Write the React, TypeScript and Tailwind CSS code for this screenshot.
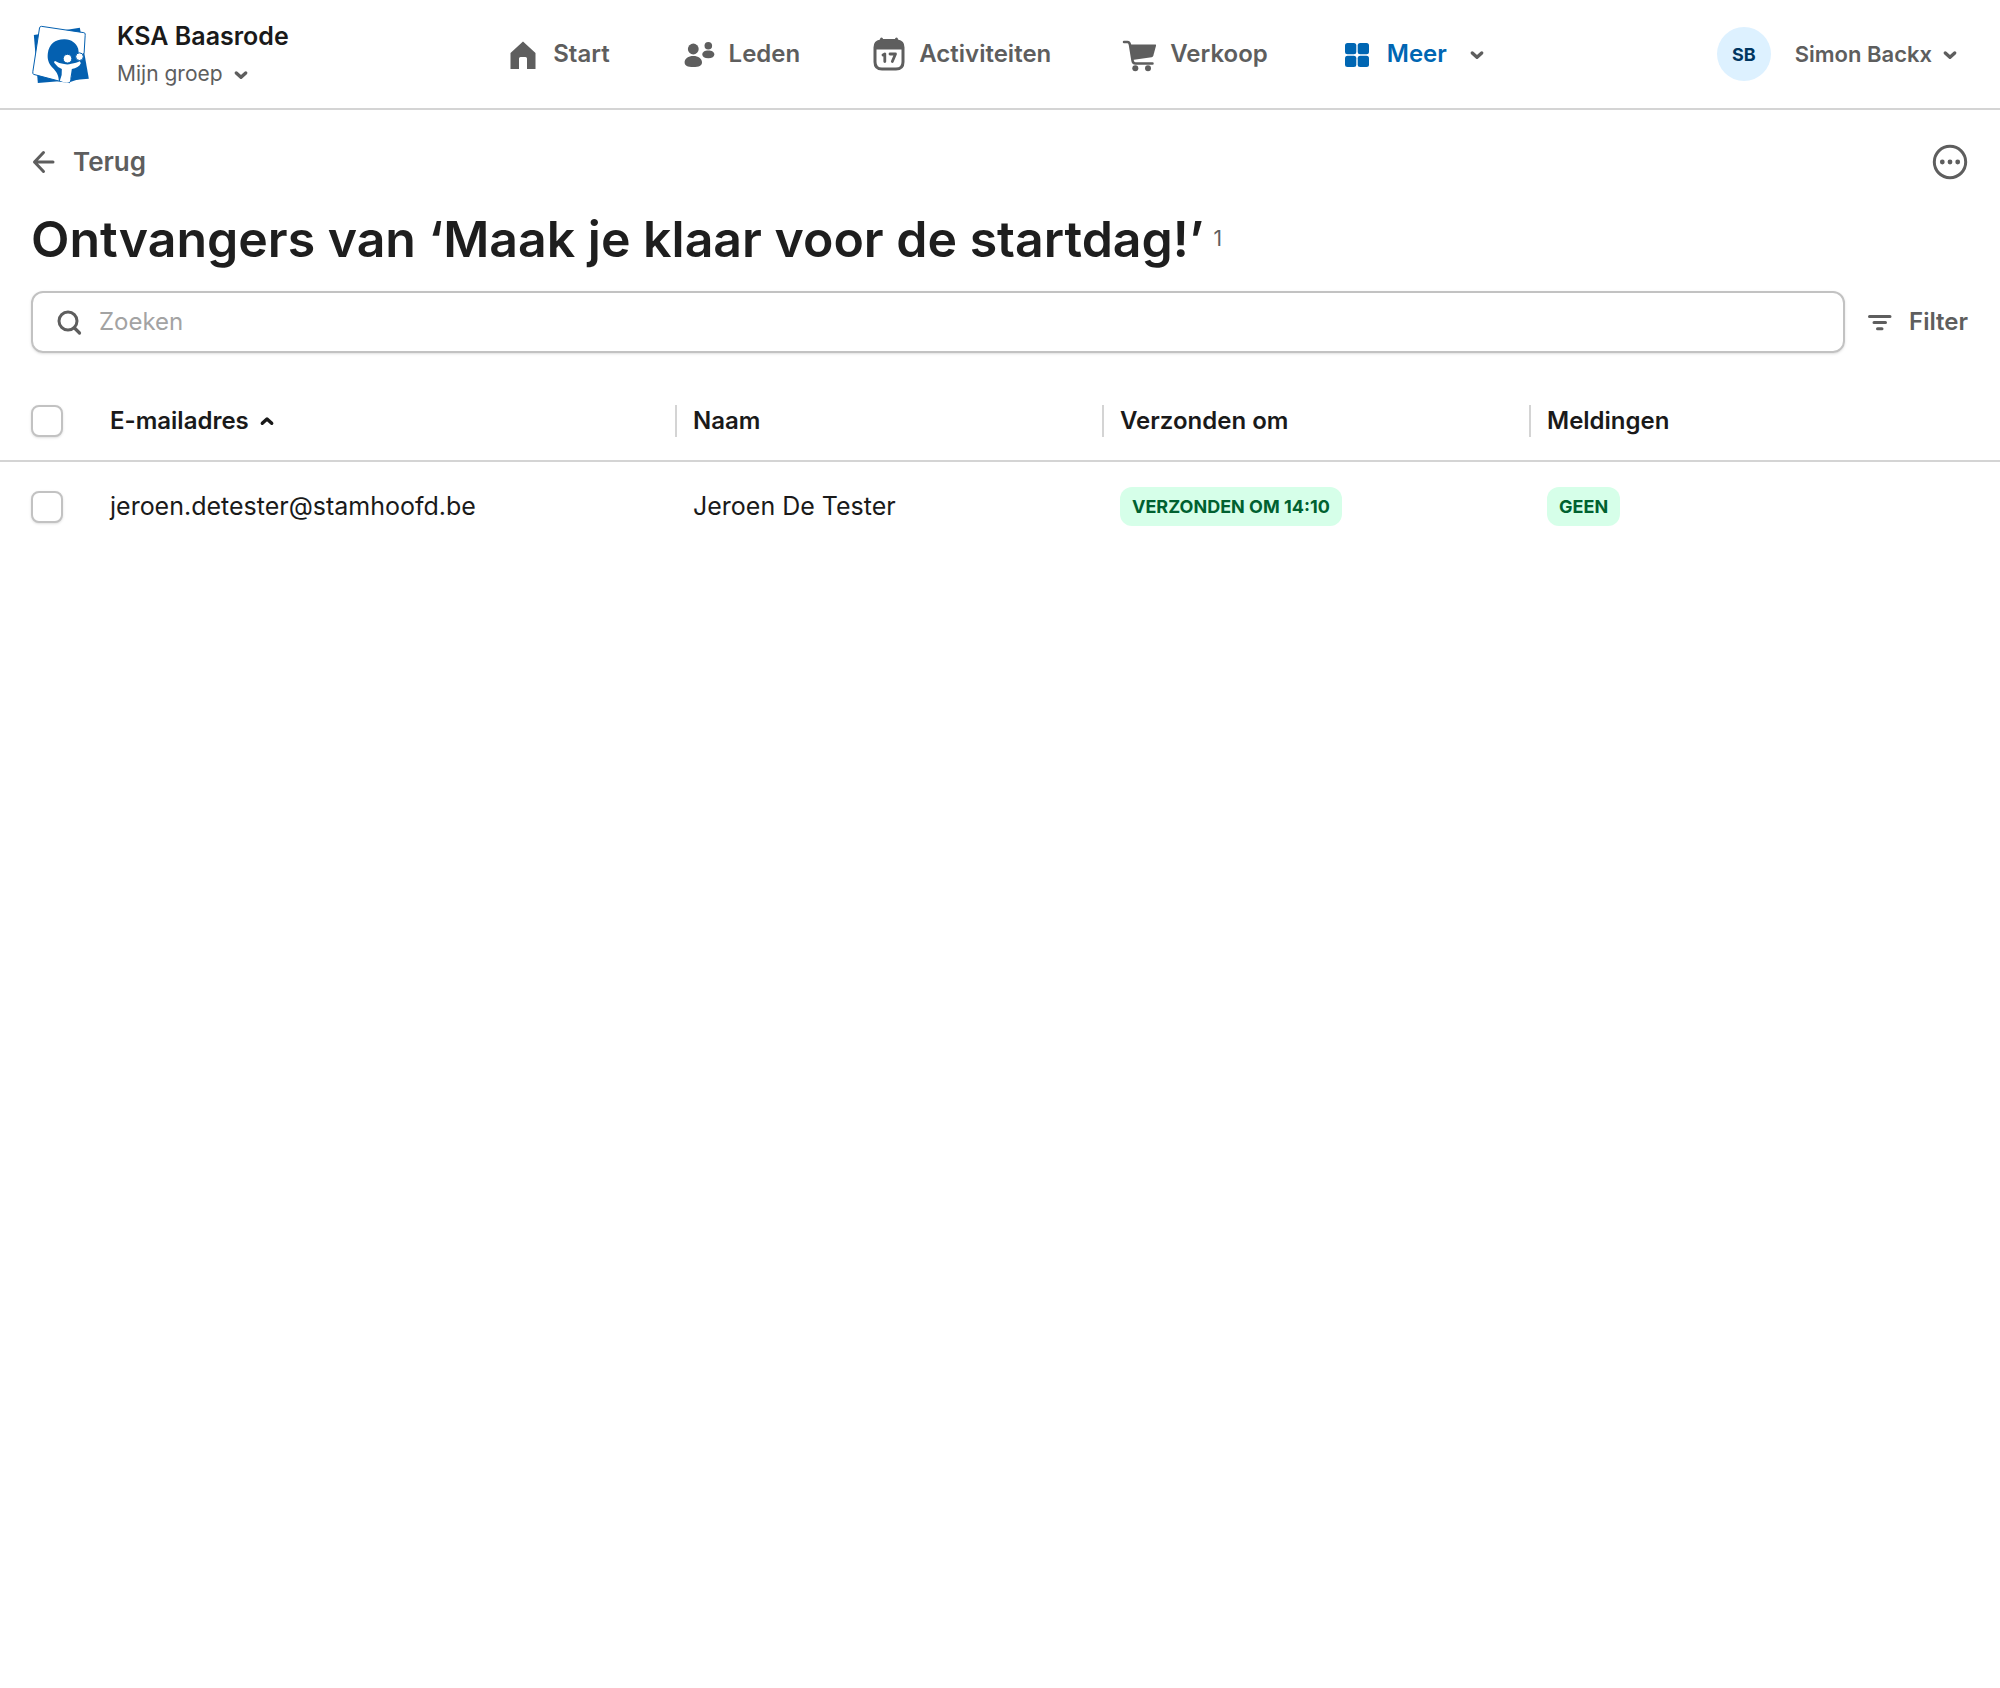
import type { ReactNode } from "react";

type NavItem = {
  label: string;
  icon: ReactNode;
  active?: boolean;
};

type Recipient = {
  email: string;
  name: string;
  sent: string;
  notices: string;
};

const recipients: Recipient[] = [
  {
    email: "jeroen.detester@stamhoofd.be",
    name: "Jeroen De Tester",
    sent: "Verzonden om 14:10",
    notices: "Geen",
  },
];

const columns = ["E-mailadres", "Naam", "Verzonden om", "Meldingen"];

function Icon({ children }: { children: ReactNode }) {
  return (
    <svg
      viewBox="0 0 36 36"
      className="size-9 shrink-0"
      fill="none"
      stroke="currentColor"
      strokeLinecap="round"
      strokeLinejoin="round"
      aria-hidden="true"
    >
      {children}
    </svg>
  );
}

function ChevronDown() {
  return (
    <Icon>
      <path d="M13.3 17 18 21.300l4.700-4.300" strokeWidth="3.400" />
    </Icon>
  );
}

function Logo() {
  return (
    <svg viewBox="100 75 170 177" className="h-[59px] w-[57px] shrink-0" aria-hidden="true">
      <path d="M105 105 243 83 270 236 117 249Z" fill="#0460b0" />
      <path
        d="M128 79 255 98Q261 99 259 106L256 157 236 206 212 248 180 243 104 223Q101 221 102 215L122 84Q124 78 128 79Z"
        fill="#fff"
        stroke="#0460b0"
        strokeWidth="3"
      />
      <path
        d="M180 243C180 226 172 214 162 204C148 190 145 176 147 160C151 132 170 117 198 118C218 119 232 129 238 146L240 160 256 180 250 200 226 206 212 248Z"
        fill="#0460b0"
      />
      <path d="M256 172 262 230 214 246 222 206Z" fill="#0460b0" />
      <path
        d="M169 183C176 188 186 191 196 192Q207 195 217 191C228 190 236 187 243 184L246 190C242 200 232 205 219 207L213 245Q205 252 183 242Q191 224 189 207Q176 202 166 188Q165 183 169 183Z"
        fill="#fff"
      />
      <circle cx="206" cy="176" r="13" fill="#fff" stroke="#0460b0" strokeWidth="3" />
      <circle cx="242" cy="170" r="11.500" fill="#fff" stroke="#0460b0" strokeWidth="3" />
    </svg>
  );
}

const navItems: NavItem[] = [
  {
    label: "Start",
    icon: (
      <Icon>
        <path
          d="M18 5.500 30.500 17v16H22V22.500q0-1.500-1.500-1.500h-5q-1.500 0-1.500 1.500V33H5.500V17Z"
          fill="currentColor"
          stroke="none"
        />
      </Icon>
    ),
  },
  {
    label: "Leden",
    icon: (
      <Icon>
        <g fill="currentColor" stroke="none">
          <circle cx="12.300" cy="13" r="5.400" />
          <path d="M12.300 20c5 0 8.700 2.600 8.700 6.300 0 3.500-3 4.700-8.700 4.700s-8.700-1.200-8.700-4.700C3.600 22.600 7.300 20 12.300 20Z" />
          <circle cx="27.300" cy="9.800" r="3.800" />
          <path d="M27.300 14.600c3.600 0 6 1.500 6 4 0 2.400-2.200 3.600-6 3.600s-6-1.200-6-3.600c0-2.500 2.400-4 6-4Z" />
        </g>
      </Icon>
    ),
  },
  {
    label: "Activiteiten",
    icon: (
      <Icon>
        <path
          fillRule="evenodd"
          d="M9 3.500q0-2 1.500-2T12 3h12q0-1.500 1.500-1.500t1.500 2q6.500 1 6.500 8v14.500q0 8.500-8.500 8.500H11q-8.500 0-8.500-8.500V11.500Q2.500 4.500 9 3.500ZM5.500 13.500v12.500Q5.500 31.500 11 31.500h14q5.500 0 5.500-5.500V13.500Z"
          fill="currentColor"
          stroke="none"
        />
        <path d="m12 19 1.800-1v7.500M19 18h5.500l-3.200 7.500" strokeWidth="2.800" />
      </Icon>
    ),
  },
  {
    label: "Verkoop",
    icon: (
      <Icon>
        <path d="M2 6H5.500q2 0 2.500 3l2.500 15.500q.4 3 3 3h17" strokeWidth="2.500" />
        <path d="M7.500 8.500h26q.8 0 .5 1.200l-2.700 10q-.4 1.300-1.700 1.500L10.200 24Z" fill="currentColor" stroke="none" />
        <circle cx="13.300" cy="32.300" r="3" fill="currentColor" stroke="none" />
        <circle cx="26" cy="32.300" r="3" fill="currentColor" stroke="none" />
      </Icon>
    ),
  },
  {
    label: "Meer",
    active: true,
    icon: (
      <Icon>
        <g fill="currentColor" stroke="none">
          <rect x="6" y="7" width="11.300" height="11.300" rx="2.500" />
          <rect x="18.700" y="7" width="11.300" height="11.300" rx="2.500" />
          <rect x="6" y="19.700" width="11.300" height="11.300" rx="2.500" />
          <rect x="18.700" y="19.700" width="11.300" height="11.300" rx="2.500" />
        </g>
      </Icon>
    ),
  },
];

function Checkbox({ label }: { label: string }) {
  return (
    <input
      type="checkbox"
      aria-label={label}
      className="block size-8 appearance-none rounded-lg border-2 border-[#c2c2c2] bg-white shadow-sm checked:bg-[#0066b3]"
    />
  );
}

function Badge({ children }: { children: ReactNode }) {
  return (
    <span className="flex h-[39px] w-fit items-center rounded-xl bg-[#d6ffe9] px-3 text-[18px] font-bold text-[#006130] uppercase">
      {children}
    </span>
  );
}

function Header() {
  return (
    <header className="grid h-[110px] grid-cols-[1fr_auto_1fr] items-center border-b-2 border-[#d4d4d4] px-8">
      <button type="button" className="flex items-center gap-7 text-left">
        <Logo />
        <span className="flex flex-col gap-1 pt-1">
          <span className="text-[25px] leading-8 font-semibold text-[#1a1a1a]">KSA Baasrode</span>
          <span className="flex items-center text-[21px] leading-9">
            Mijn groep
            <ChevronDown />
          </span>
        </span>
      </button>

      <nav className="flex items-center gap-[71px] text-[24px] font-semibold">
        {navItems.map((item) => (
          <a
            key={item.label}
            href="#"
            className={item.active ? "flex items-center gap-3 text-[#0066b3]" : "flex items-center gap-3"}
          >
            {item.icon}
            {item.label}
            {item.active && (
              <span className="text-[#5e5e5e]">
                <ChevronDown />
              </span>
            )}
          </a>
        ))}
      </nav>

      <button type="button" className="flex items-center justify-self-end text-[22px] font-semibold">
        <span className="mr-6 flex size-[54px] items-center justify-center rounded-full bg-[#ddf1ff] text-[18px] font-bold text-[#003661]">
          SB
        </span>
        Simon Backx
        <ChevronDown />
      </button>
    </header>
  );
}

export default function App() {
  return (
    <div className="min-h-screen bg-white font-['Inter',sans-serif] text-[#5e5e5e]">
      <Header />

      <main className="pt-[34px]">
        <div className="pr-8 pl-[31px]">
          <div className="flex items-center justify-between">
            <button type="button" className="flex items-center gap-1.5 text-[26px] leading-9 font-semibold">
              <Icon>
                <path d="M22 18H3.500M12.500 8.500 3.500 18l9 9.500" strokeWidth="3" />
              </Icon>
              Terug
            </button>
            <button type="button" aria-label="Meer acties">
              <Icon>
                <circle cx="18" cy="18" r="15.700" strokeWidth="3" />
                <g fill="currentColor" stroke="none">
                  <circle cx="10.300" cy="18" r="2.400" />
                  <circle cx="18" cy="18" r="2.400" />
                  <circle cx="25.700" cy="18" r="2.400" />
                </g>
              </Icon>
            </button>
          </div>

          <h1 className="mt-[27px] flex items-center gap-2.5 text-[50px] leading-[64px] font-semibold text-[#1e1e1e]">
            Ontvangers van ‘Maak je klaar voor de startdag!’
            <span className="text-[21px] leading-6 font-normal text-[#5e5e5e]">1</span>
          </h1>

          <div className="mt-5 flex items-center gap-4">
            <label className="flex h-[62px] grow items-center gap-3 rounded-xl border-2 border-[#c2c2c2] px-[18px] shadow-sm">
              <Icon>
                <circle cx="17" cy="17" r="9" strokeWidth="3" />
                <path d="m23.500 24 5 5" strokeWidth="3.200" />
              </Icon>
              <input
                type="search"
                aria-label="Zoeken"
                placeholder="Zoeken"
                className="grow bg-transparent text-[24px] text-[#1e1e1e] outline-none placeholder:text-[#a3a3a3]"
              />
            </label>
            <button type="button" className="flex items-center gap-3 text-[24px] font-semibold">
              <Icon>
                <path d="M8.500 12.500h20.500M13 18.500h11.500M16.500 24.700h4.500" strokeWidth="3" />
              </Icon>
              Filter
            </button>
          </div>
        </div>

        <table className="mt-7 w-full table-fixed text-left text-[#1a1a1a]">
          <colgroup>
            <col className="w-[110px]" />
            <col className="w-[28.25%]" />
            <col className="w-[21.35%]" />
            <col className="w-[21.35%]" />
            <col />
          </colgroup>
          <thead>
            <tr className="h-20 border-b-2 border-[#d4d4d4]">
              <th className="pl-[31px]">
                <Checkbox label="Alles selecteren" />
              </th>
              {columns.map((column, i) => (
                <th key={column} className="text-[24px] font-semibold">
                  {i === 0 ? (
                    <button type="button" className="flex items-center">
                      {column}
                      <Icon>
                        <path d="m13.300 20.300 4.700-4.300 4.700 4.300" strokeWidth="3.400" />
                      </Icon>
                    </button>
                  ) : (
                    <div className="border-l-2 border-[#d4d4d4] pl-4 leading-8">{column}</div>
                  )}
                </th>
              ))}
            </tr>
          </thead>
          <tbody className="text-[25px]">
            {recipients.map((recipient) => (
              <tr key={recipient.email} className="h-[90px]">
                <td className="pl-[31px]">
                  <Checkbox label={`Selecteer ${recipient.name}`} />
                </td>
                <td>{recipient.email}</td>
                <td className="pl-[18px]">{recipient.name}</td>
                <td className="pl-[18px]">
                  <Badge>{recipient.sent}</Badge>
                </td>
                <td className="pl-[18px]">
                  <Badge>{recipient.notices}</Badge>
                </td>
              </tr>
            ))}
          </tbody>
        </table>
      </main>
    </div>
  );
}
